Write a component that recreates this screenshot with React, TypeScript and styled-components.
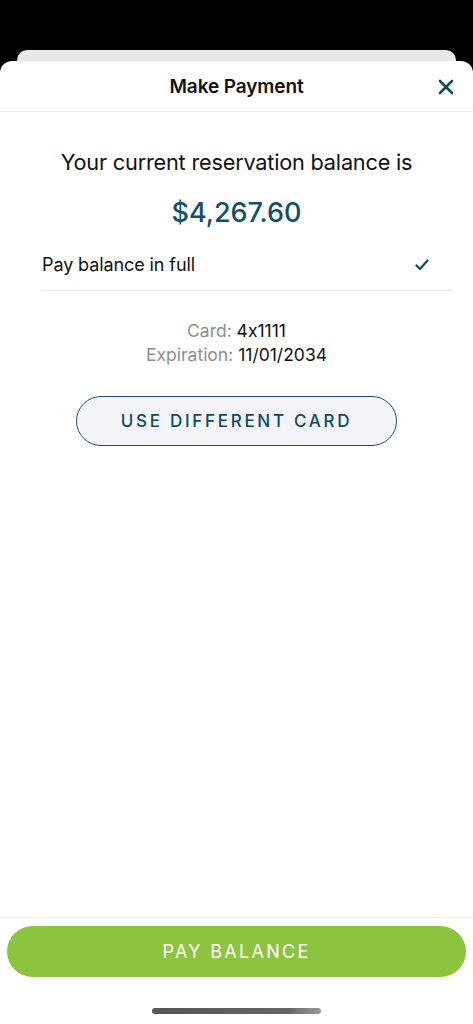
import React from "react";
import styled, { createGlobalStyle } from "styled-components";

const Global = createGlobalStyle`
  html, body { margin: 0; padding: 0; background: #000; }
  body {
    font-family: Inter, "Noto Sans", "Liberation Sans", sans-serif;
    font-feature-settings: "calt" 0;
    -webkit-font-smoothing: antialiased;
  }
  * { box-sizing: border-box; }
`;

const Page = styled.div`
  width: 473px;
  height: 1024px;
  background: #000;
  display: flex;
  flex-direction: column;
  overflow: hidden;
`;

const BackCard = styled.div`
  margin: 50px 17px 0 17px;
  height: 11px;
  background: #e8e8e8;
  border-radius: 10px 10px 0 0;
`;

const Sheet = styled.div`
  flex: 1;
  background: #fff;
  border-radius: 12px 12px 0 0;
  display: flex;
  flex-direction: column;
`;

const Header = styled.div`
  height: 51px;
  padding-top: 1px;
  display: grid;
  grid-template-columns: 1fr auto 1fr;
  align-items: center;
  border-bottom: 1px solid #ededed;
`;

const Title = styled.h1`
  grid-column: 2;
  margin: 0;
  font-size: 19px;
  font-weight: 600;
  color: #111;
  letter-spacing: -0.1px;
`;

const CloseButton = styled.button`
  grid-column: 3;
  justify-self: end;
  margin-right: 17px;
  width: 20px;
  height: 20px;
  padding: 0;
  border: none;
  background: none;
  display: flex;
  align-items: center;
  justify-content: center;
  color: #0f4a63;
`;

const Content = styled.div`
  flex: 1;
  display: flex;
  flex-direction: column;
  align-items: center;
  padding: 38px 20px 0 42px;
`;

const Lead = styled.p`
  margin: 0;
  font-size: 21.7px;
  font-weight: 400;
  color: #111;
  line-height: 24px;
  letter-spacing: -0.2px;
  padding-right: 22px;
`;

const Amount = styled.p`
  margin: 24px 0 0;
  font-size: 27px;
  font-weight: 500;
  color: #154e68;
  line-height: 30px;
  padding-right: 22px;
`;

const OptionRow = styled.div`
  align-self: stretch;
  margin-top: 17px;
  height: 46px;
  display: flex;
  align-items: center;
  justify-content: space-between;
  border-bottom: 1px solid #e9e9e9;
  padding: 0 24px 6px 0;
`;

const OptionLabel = styled.span`
  font-size: 18px;
  color: #111;
  letter-spacing: -0.1px;
`;

const CardInfo = styled.div`
  margin-top: 28px;
  display: flex;
  flex-direction: column;
  align-items: center;
  font-size: 17.5px;
  line-height: 24px;
  padding-right: 22px;
`;

const InfoLine = styled.div`
  color: #111;
`;

const InfoLabel = styled.span`
  color: #8e8e93;
`;

const OutlineButton = styled.button`
  margin-top: 29px;
  margin-right: 22px;
  width: 321px;
  height: 50px;
  border-radius: 25px;
  border: 1px solid #1f5068;
  background: #f2f4f8;
  color: #0f4a63;
  font-family: inherit;
  font-size: 17px;
  font-weight: 500;
  letter-spacing: 2.7px;
`;

const Footer = styled.div`
  border-top: 1px solid #efefef;
  padding: 8px 7px 0;
  display: flex;
  flex-direction: column;
  align-items: center;
`;

const PrimaryButton = styled.button`
  width: 100%;
  height: 51px;
  border-radius: 26px;
  border: none;
  background: #8cc43f;
  color: #fff;
  font-family: inherit;
  font-size: 18px;
  font-weight: 400;
  letter-spacing: 2.3px;
`;

const HomeIndicator = styled.div`
  margin: 31px 0 10px;
  width: 169px;
  height: 6px;
  border-radius: 3px;
  background: linear-gradient(90deg, #555 0%, #666 80%, #999 100%);
`;

export default function App() {
  return (
    <>
      <Global />
      <Page>
        <BackCard />
        <Sheet>
          <Header>
            <Title>Make Payment</Title>
            <CloseButton aria-label="Close">
              <svg width="16" height="16" viewBox="0 0 16 16" fill="none" stroke="currentColor" strokeWidth="2.6" strokeLinecap="round">
                <path d="M2 2 L14 14 M14 2 L2 14" />
              </svg>
            </CloseButton>
          </Header>
          <Content>
            <Lead>Your current reservation balance is</Lead>
            <Amount>$4,267.60</Amount>
            <OptionRow>
              <OptionLabel>Pay balance in full</OptionLabel>
              <svg width="14" height="12" viewBox="0 0 14 12" fill="none" stroke="#0f4a63" strokeWidth="2.2" strokeLinecap="round" strokeLinejoin="round">
                <path d="M1.5 6.5 L5 10 L12.5 1.5" />
              </svg>
            </OptionRow>
            <CardInfo>
              <InfoLine><InfoLabel>Card:</InfoLabel> 4x1111</InfoLine>
              <InfoLine><InfoLabel>Expiration:</InfoLabel> 11/01/2034</InfoLine>
            </CardInfo>
            <OutlineButton>USE DIFFERENT CARD</OutlineButton>
          </Content>
          <Footer>
            <PrimaryButton>PAY BALANCE</PrimaryButton>
            <HomeIndicator />
          </Footer>
        </Sheet>
      </Page>
    </>
  );
}
